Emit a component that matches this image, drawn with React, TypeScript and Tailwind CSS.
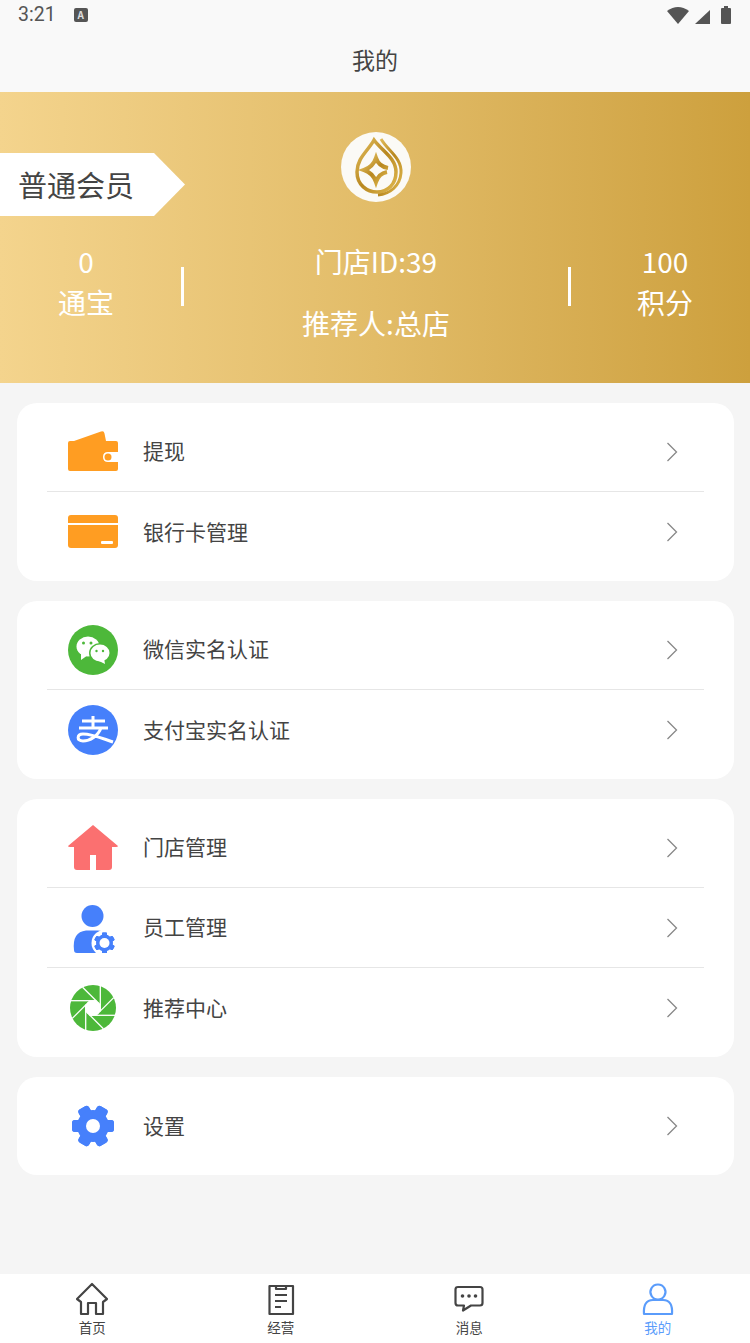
import type { ReactNode } from "react";

const cjk = "font-['Noto_Sans_CJK_SC','Noto_Sans',sans-serif]";

function Wallet() {
  return (
    <svg viewBox="0 0 50 50" className="h-[50px] w-[50px]">
      <path d="M6 14 L33 4.500 Q36 3.500 36.500 6.500 L38 14 Z" fill="#ff9d22" />
      <path
        d="M2 14 H48 Q50 14 50 16 V25 H40 Q35 25 35 30 Q35 35 40 35 H50 V42 Q50 44 48 44 H2 Q0 44 0 42 V16 Q0 14 2 14 Z"
        fill="#ff9d22"
      />
      <circle cx="40" cy="30" r="3.500" fill="#ff9d22" />
    </svg>
  );
}

function BankCard() {
  return (
    <svg viewBox="0 0 50 50" className="h-[50px] w-[50px]">
      <path d="M3 8 H47 Q50 8 50 11 V16 H0 V11 Q0 8 3 8 Z" fill="#ff9d22" />
      <path d="M0 18 H50 V38 Q50 41 47 41 H3 Q0 41 0 38 Z" fill="#ff9d22" />
      <rect x="33" y="34" width="12" height="3" rx="1" fill="#fff" />
    </svg>
  );
}

function Wechat() {
  return (
    <svg viewBox="0 0 50 50" className="h-[50px] w-[50px]">
      <circle cx="25" cy="25" r="25" fill="#4db83a" />
      <path d="M13 27 L13 35 L20 30 Z" fill="#fff" />
      <ellipse cx="20" cy="21.500" rx="11.500" ry="10" fill="#fff" />
      <ellipse cx="32" cy="28" rx="11" ry="10" fill="#4db83a" />
      <path d="M36 33 L37 39 L31 36 Z" fill="#fff" />
      <ellipse cx="32" cy="28" rx="9.500" ry="8.500" fill="#fff" />
      <circle cx="15.500" cy="18" r="1.500" fill="#4db83a" />
      <circle cx="23" cy="18" r="1.500" fill="#4db83a" />
      <circle cx="28.500" cy="26" r="1.200" fill="#4db83a" />
      <circle cx="35" cy="26" r="1.200" fill="#4db83a" />
    </svg>
  );
}

function Alipay() {
  return (
    <svg viewBox="0 0 50 50" className="h-[50px] w-[50px]">
      <circle cx="25" cy="25" r="25" fill="#4680fb" />
      <path
        d="M14 16 H37 M25 11 V23 M11 23 H40 M33 23 C30 31 22 36 15 36 C8 36 9 29 15 29 C24 29 33 33 45 37"
        fill="none"
        stroke="#fff"
        strokeWidth="3"
      />
    </svg>
  );
}

function Store() {
  return (
    <svg viewBox="0 0 50 50" className="h-[50px] w-[50px]">
      <path
        d="M25 2 L50 23 Q50 24 48 24 H44 V44 Q44 47 41 47 H28 V32 H22 V47 H9 Q6 47 6 44 V24 H2 Q0 24 0 23 Z"
        fill="#fb7070"
      />
    </svg>
  );
}

const gearAngles = [0, 60, 120, 180, 240, 300];

function Staff() {
  return (
    <svg viewBox="0 0 50 50" className="h-[50px] w-[50px]">
      <circle cx="24.500" cy="13" r="11" fill="#4680fb" />
      <path d="M6 47 Q4 29 18 27.500 H30 Q38 28 40 34 V50 H9 Q6 50 6 47 Z" fill="#4680fb" />
      <circle cx="36.500" cy="40" r="13" fill="#fff" />
      {gearAngles.map((a) => (
        <rect
          key={a}
          x="34"
          y="29.500"
          width="5"
          height="21"
          rx="1"
          fill="#4680fb"
          transform={`rotate(${a} 36.500 40)`}
        />
      ))}
      <circle cx="36.500" cy="40" r="8.500" fill="#4680fb" />
      <circle cx="36.500" cy="40" r="5" fill="#fff" />
    </svg>
  );
}

const bladeAngles = [0, 45, 90, 135, 180, 225, 270, 315];

function Aperture() {
  return (
    <svg viewBox="0 0 50 50" className="h-[50px] w-[50px]">
      <circle cx="25" cy="25" r="23" fill="#4db83a" />
      <circle cx="25" cy="25" r="7.800" fill="#fff" />
      {bladeAngles.map((a) => (
        <path key={a} d="M32.300 3 V28.500" stroke="#fff" strokeWidth="1.300" transform={`rotate(${a} 25 25)`} />
      ))}
    </svg>
  );
}

function Gear() {
  return (
    <svg viewBox="0 0 50 50" className="h-[50px] w-[50px]">
      {gearAngles.map((a) => (
        <rect key={a} x="19" y="4" width="12" height="42" rx="3" fill="#4680fb" transform={`rotate(${a + 30} 25 25)`} />
      ))}
      <circle cx="25" cy="25" r="16" fill="#4680fb" />
      <circle cx="25" cy="25" r="7" fill="#fff" />
    </svg>
  );
}

function Logo() {
  return (
    <svg viewBox="0 0 80 80" className="h-[80px] w-[80px]">
      <defs>
        <linearGradient id="gold" x1="0" y1="0" x2="1" y2="1">
          <stop offset="0" stopColor="#e4c05f" />
          <stop offset="0.5" stopColor="#b8871f" />
          <stop offset="1" stopColor="#e0b94f" />
        </linearGradient>
      </defs>
      <circle cx="40" cy="40" r="35" fill="#fbfaf6" />
      <g fill="none" stroke="url(#gold)">
        <path d="M38 13 C32 24 21 31 21 45 C21 58 31 65 41 65 C52 65 60 57 60 45 C60 31 46 24 38 13 Z" strokeWidth="3.500" />
        <path d="M45 12 C52 24 66 31 65 46 C64 59 54 67 42 68" strokeWidth="3" />
        <path
          d="M52 41 C46 40 42 37 40 31 C38 37 34 41 28 43 C34 45 38 49 40 55 C42 49 46 46 51 45"
          strokeWidth="4"
        />
      </g>
    </svg>
  );
}

function Row({ icon, label, last }: { icon: ReactNode; label: string; last?: boolean }) {
  return (
    <div className={`flex h-[80px] items-center ${last ? "" : "border-b border-[#e6e6e6]"}`}>
      <div className="ml-[21px] h-[50px] w-[50px] shrink-0">{icon}</div>
      <span className="ml-[25px] pb-[2px] text-[21px] leading-none text-[#444]">{label}</span>
      <svg viewBox="0 0 12 20" className="ml-auto mr-[26px] h-[20px] w-[12px]">
        <path d="M1.500 1 L10.500 10 L1.500 19" fill="none" stroke="#888" strokeWidth="1.300" />
      </svg>
    </div>
  );
}

const groups = [
  [
    { label: "提现", icon: <Wallet /> },
    { label: "银行卡管理", icon: <BankCard /> },
  ],
  [
    { label: "微信实名认证", icon: <Wechat /> },
    { label: "支付宝实名认证", icon: <Alipay /> },
  ],
  [
    { label: "门店管理", icon: <Store /> },
    { label: "员工管理", icon: <Staff /> },
    { label: "推荐中心", icon: <Aperture /> },
  ],
  [{ label: "设置", icon: <Gear /> }],
];

const navItems = [
  {
    label: "首页",
    path: "M17 2 L2 17 L6 20 V32 H13 V21 H21 V32 H28 V20 L32 17 Z",
  },
  {
    label: "经营",
    path: "M5.500 4 H29 V32 H5.500 Z M12 4 V7 H22 V4 M11 13 H23 M11 19 H23 M11 25 H17",
  },
  {
    label: "消息",
    path: "M6 5 H28 Q30.500 5 30.500 7.500 V21 Q30.500 23.500 28 23.500 H19 L11 28.500 L12 23.500 H6 Q3.500 23.500 3.500 21 V7.500 Q3.500 5 6 5 Z",
  },
  {
    label: "我的",
    path: "M17 2.500 A7.500 7.500 0 1 1 16.900 2.500 Z M3 32 Q2 18 12 18 H22 Q32 18 31 32 Z",
    active: true,
  },
];

export default function App() {
  return (
    <div className={`flex h-[1343px] w-[750px] flex-col overflow-hidden bg-[#f5f5f5] ${cjk}`}>
      {/* Status bar and title */}
      <div className="h-[92px] shrink-0 bg-[#f9f9f9]">
        <div className="flex h-[30px] items-center pl-[18px] text-[#555]">
          <span className="font-['Roboto',sans-serif] text-[19.500px] leading-none">3:21</span>
          <span className="ml-[18px] flex h-[14px] w-[14px] items-center justify-center rounded-[2px] bg-[#555] text-[10px] font-bold leading-none text-[#ddd]">
            A
          </span>
          <svg viewBox="0 0 65 20" className="ml-[579px] h-[20px] w-[65px]">
            <path d="M0 6 Q11 -2 22 6 L11 19 Z" fill="#555" />
            <path d="M28 19 L43 5 V19 Z" fill="#555" />
            <rect x="54" y="3" width="10" height="16" rx="1" fill="#555" />
            <rect x="57" y="1" width="4" height="3" fill="#555" />
          </svg>
        </div>
        <div className="flex h-[58px] items-center justify-center text-[23px] leading-none text-[#444]">我的</div>
      </div>

      {/* Member banner */}
      <div className="relative h-[291px] shrink-0 bg-gradient-to-r from-[#f4d48d] via-[#e2bc68] to-[#cda03d] text-white">
        <div className="absolute left-0 top-[61px] flex h-[63px] w-[185px] items-center bg-white pb-[1px] pl-[18px] text-[29px] leading-none text-[#444] [clip-path:polygon(0_0,154px_0,100%_50%,154px_100%,0_100%)]">
          普通会员
        </div>
        <div className="flex justify-center pl-[1px] pt-[35px]">
          <Logo />
        </div>
        <div className="mt-[34px] flex items-start text-center text-[28px] font-normal leading-[41px]">
          <div className="w-[172px]">
            <div>0</div>
            <div>通宝</div>
          </div>
          <div className="ml-[9px] mt-[26px] h-[39px] w-[3px] bg-white" />
          <div className="flex-1">
            <div>门店ID:39</div>
            <div className="mt-[21px]">推荐人:总店</div>
          </div>
          <div className="mt-[26px] h-[39px] w-[3px] bg-white" />
          <div className="ml-[7px] w-[172px] pl-[2px]">
            <div>100</div>
            <div>积分</div>
          </div>
        </div>
      </div>

      {/* Menu cards */}
      <div className="flex flex-1 flex-col gap-[20px] pl-[17px] pr-[16px] pt-[20px]">
        {groups.map((group) => (
          <div key={group[0].label} className="rounded-[20px] bg-white px-[30px] py-[9px]">
            {group.map((item, i) => (
              <Row key={item.label} icon={item.icon} label={item.label} last={i === group.length - 1} />
            ))}
          </div>
        ))}
      </div>

      {/* Bottom tabs */}
      <div className="h-[69px] shrink-0 bg-white">
        <div className="-mx-[2px] grid grid-cols-4">
          {navItems.map((item) => (
            <div key={item.label} className="flex flex-col items-center pt-[8px]">
              <svg viewBox="0 0 34 34" className="h-[34px] w-[34px]">
                <path
                  d={item.path}
                  fill="none"
                  stroke={item.active ? "#5a9cfb" : "#444"}
                  strokeWidth="2.200"
                  strokeLinejoin="round"
                />
                {item.label === "消息" && (
                  <g fill="#444">
                    <circle cx="10.500" cy="14" r="1.800" />
                    <circle cx="17" cy="14" r="1.800" />
                    <circle cx="23.500" cy="14" r="1.800" />
                  </g>
                )}
              </svg>
              <span
                className={`mt-[2px] text-[13.500px] leading-[18px] ${item.active ? "text-[#5a9cfb]" : "text-[#444]"}`}
              >
                {item.label}
              </span>
            </div>
          ))}
        </div>
      </div>
    </div>
  );
}
